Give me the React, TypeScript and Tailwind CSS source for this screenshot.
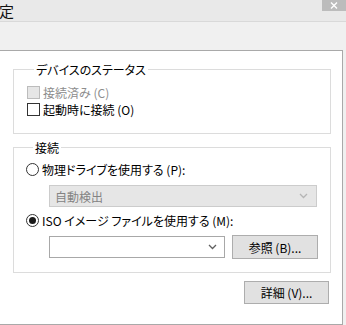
import React from "react";

const font = { fontFamily: '"Noto Sans CJK JP", "Noto Sans", sans-serif' };

function Chevron({ color }: { color: string }) {
  return (
    <svg width="9" height="6" viewBox="0 0 9 6">
      <path d="M1 1 L4.5 4.5 L8 1" fill="none" stroke={color} strokeWidth="1.3" />
    </svg>
  );
}

export default function App() {
  return (
    <div
      className="w-[346px] h-[325px] bg-[#f0f0f0] overflow-hidden flex flex-col text-[12px] leading-[15px] text-black [font-feature-settings:'palt']"
      style={font}
    >
      <div className="h-[22px] shrink-0 bg-[#e9e9e9] border-b border-[#d9d9d9] flex justify-between">
        <span className="-ml-[16px] mt-[2px] text-[15px] leading-[18px] text-[#111]">設定</span>
        <div className="w-[24px] h-[11px] bg-[#bcbcbc] flex items-center justify-center">
          <svg width="8" height="7" viewBox="0 0 8 7">
            <path d="M1 0.5 L7 6.5 M7 0.5 L1 6.5" stroke="#fff" strokeWidth="1.4" />
          </svg>
        </div>
      </div>
      <div className="h-[28px] shrink-0" />
      <div className="-ml-px w-[344px] flex-1 bg-white border border-[#a9a9a9] pl-[13px] pr-[11px] pt-[11px]">
        <fieldset className="border border-[#dcdcdc] pl-[13px] pb-[15px]">
          <legend className="ml-[7px] px-[2px] leading-[15px]">デバイスのステータス</legend>
          <div className="pt-[7px] flex flex-col">
            <div className="h-[17px] flex items-center gap-[3px] text-[#8d8d8d]">
              <span className="w-[13px] h-[13px] border border-[#bcbcbc] bg-[#e6e6e6]" />
              <span>接続済み (C)</span>
            </div>
            <div className="h-[17px] flex items-center gap-[3px]">
              <span className="w-[13px] h-[13px] border border-[#333] bg-white" />
              <span>起動時に接続 (O)</span>
            </div>
          </div>
        </fieldset>
        <fieldset className="mt-[6px] border border-[#dcdcdc] pl-[12px] pb-[13px]">
          <legend className="ml-[7px] px-[2px] leading-[15px]">接続</legend>
          <div className="pt-[6px] flex flex-col">
            <div className="h-[17px] flex items-center gap-[3px]">
              <span className="w-[13px] h-[13px] rounded-full border border-[#333] bg-white" />
              <span>物理ドライブを使用する (P):</span>
            </div>
            <div className="mt-[7px] ml-[23px] w-[268px] h-[22px] border border-[#cccccc] bg-[#e6e6e6] flex items-center justify-between pl-[5px] pr-[8px] text-[#838383]">
              <span>自動検出</span>
              <Chevron color="#b5b5b5" />
            </div>
            <div className="mt-[5px] h-[17px] flex items-center gap-[3px]">
              <span className="w-[13px] h-[13px] rounded-full border border-[#333] bg-white flex items-center justify-center">
                <span className="w-[7px] h-[7px] rounded-full bg-[#1a1a1a]" />
              </span>
              <span>ISO イメージ ファイルを使用する (M):</span>
            </div>
            <div className="mt-[6px] ml-[23px] flex items-center gap-[7px]">
              <div className="w-[176px] h-[22px] border border-[#a8a8a8] bg-white flex items-center justify-end pr-[7px]">
                <Chevron color="#606060" />
              </div>
              <div className="w-[86px] h-[24px] border border-[#adadad] bg-[#e1e1e1] flex items-center justify-center">
                参照 (B)...
              </div>
            </div>
          </div>
        </fieldset>
        <div className="mt-[8px] flex justify-end pr-[2px]">
          <div className="w-[85px] h-[23px] border border-[#adadad] bg-[#e1e1e1] flex items-center justify-center">
            詳細 (V)...
          </div>
        </div>
      </div>
    </div>
  );
}
